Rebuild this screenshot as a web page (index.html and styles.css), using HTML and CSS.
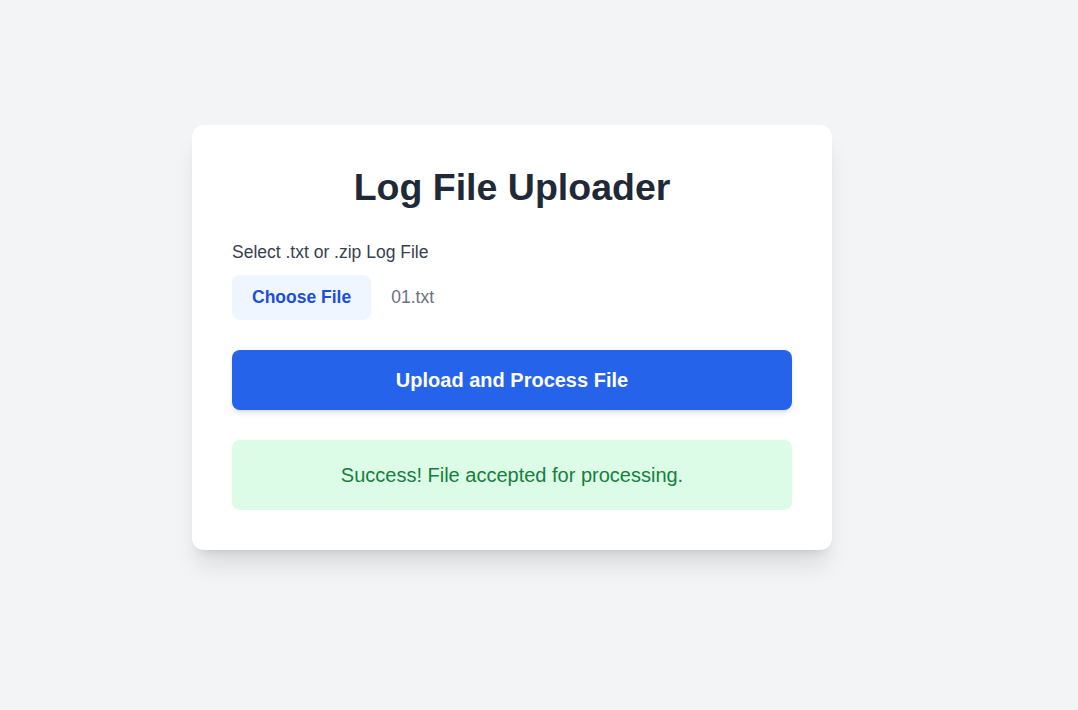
FILE: index.html
```html
<!DOCTYPE html>
<html lang="en">
<head>
<meta charset="utf-8">
<title>Log File Uploader</title>
<link rel="stylesheet" href="styles.css">
</head>
<body>
<main class="card">
  <h1 class="title">Log File Uploader</h1>
  <form class="form">
    <div class="field">
      <label class="label">Select .txt or .zip Log File</label>
      <div class="file-row">
        <span class="file-btn">Choose File</span>
        <span class="file-name">01.txt</span>
      </div>
    </div>
    <button type="button" class="submit">Upload and Process File</button>
  </form>
  <div class="alert">Success! File accepted for processing.</div>
</main>
</body>
</html>
```
FILE: styles.css
```css
* { box-sizing: border-box; }
html, body { margin: 0; }
body {
  background: #f3f4f6;
  font-family: "Liberation Sans", Arial, sans-serif;
  min-height: 710px;
  padding: 125px 0 0 192px;
}
.card {
  width: 640px;
  background: #fff;
  border-radius: 12px;
  padding: 40px;
  box-shadow: 0 20px 25px -5px rgba(0,0,0,0.1), 0 8px 10px -6px rgba(0,0,0,0.1);
}
.title {
  margin: 0 0 32px;
  text-align: center;
  font-size: 37.5px;
  line-height: 44px;
  font-weight: 700;
  color: #1f2937;
}
.form { display: flex; flex-direction: column; gap: 30px; }
.field { display: flex; flex-direction: column; gap: 12px; }
.label {
  font-size: 17.5px;
  line-height: 22px;
  color: #374151;
}
.file-row { display: flex; align-items: center; gap: 20px; }
.file-btn {
  display: inline-block;
  background: #eff6ff;
  color: #1d4ed8;
  font-weight: 700;
  font-size: 17.5px;
  line-height: 21px;
  padding: 12px 20px;
  border-radius: 8px;
}
.file-name { color: #6b7280; font-size: 17.5px; }
.submit {
  height: 60px;
  border: 0;
  border-radius: 8px;
  background: #2563eb;
  color: #fff;
  font-family: inherit;
  font-size: 20px;
  font-weight: 700;
  box-shadow: 0 4px 6px -1px rgba(0,0,0,0.1), 0 2px 4px -2px rgba(0,0,0,0.1);
}
.alert {
  margin-top: 30px;
  height: 70px;
  display: flex;
  align-items: center;
  justify-content: center;
  background: #dcfce7;
  color: #15803d;
  font-size: 20px;
  border-radius: 8px;
}
```
